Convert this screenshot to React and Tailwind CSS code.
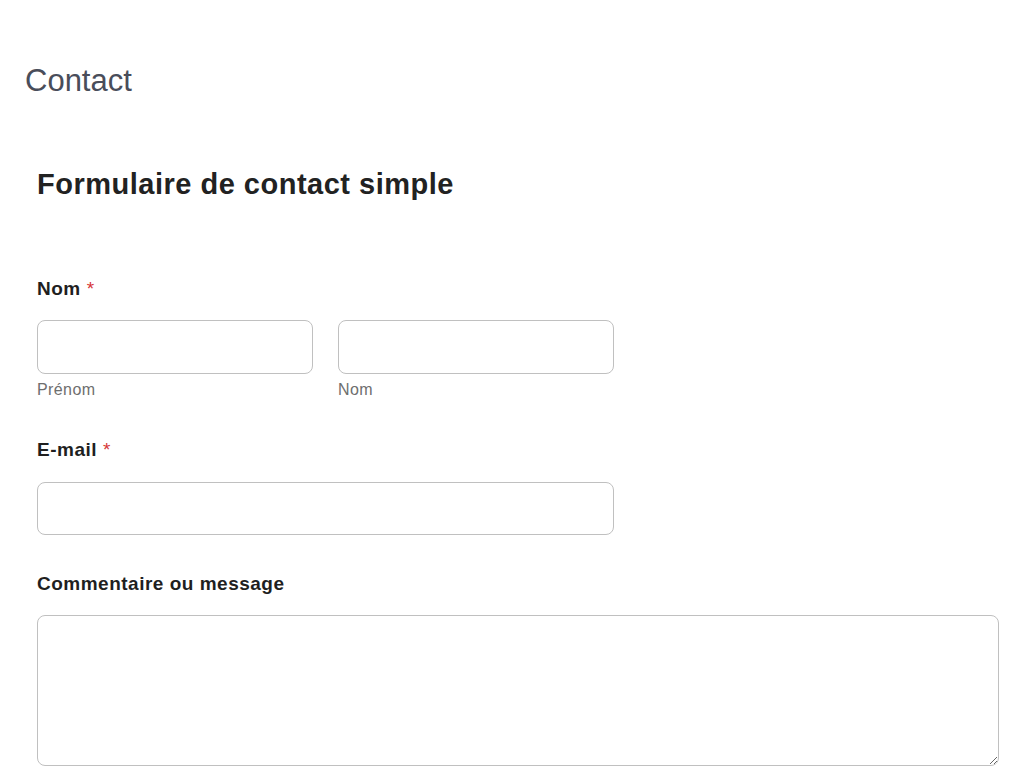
import React from "react";

function Required() {
  return <span className="ml-[6px] font-normal tracking-normal text-[#d63637]">*</span>;
}

function FieldLabel({ children, required }) {
  return (
    <label className="block text-[19px] leading-[22px] font-bold tracking-[0.5px] text-[#1f1f1f]">
      {children}
      {required && <Required />}
    </label>
  );
}

function TextInput() {
  return (
    <input
      type="text"
      className="block w-full h-[54px] rounded-[8px] border border-[#c0c0c0] bg-white px-3 text-[16px] outline-none"
    />
  );
}

export default function App() {
  return (
    <div
      className="min-h-screen bg-white pb-10"
      style={{ fontFamily: '"Liberation Sans", Arial, sans-serif' }}
    >
      <h1 className="pl-[25px] pt-[63px] text-[31px] leading-[36px] font-normal text-[#494d5a]">
        Contact
      </h1>

      <div className="pl-[37px] pr-[15px]">
        {/* form title */}
        <h2 className="mt-[68px] text-[29px] leading-[34px] font-bold tracking-[0.5px] text-[#222222]">
          Formulaire de contact simple
        </h2>

        <form className="mt-[77px]">
          {/* name */}
          <FieldLabel required>Nom</FieldLabel>
          <div className="mt-[20px] flex w-[60%] gap-[25px]">
            <div className="flex-1">
              <TextInput />
              <div className="mt-[6px] text-[16px] leading-[20px] tracking-[0.4px] text-[#6e6e6e]">Prénom</div>
            </div>
            <div className="flex-1">
              <TextInput />
              <div className="mt-[6px] text-[16px] leading-[20px] tracking-[0.4px] text-[#6e6e6e]">Nom</div>
            </div>
          </div>

          {/* email */}
          <div className="mt-[39px]">
            <FieldLabel required>E-mail</FieldLabel>
            <div className="mt-[21px] w-[60%]">
              <input
                type="email"
                className="block w-full h-[53px] rounded-[8px] border border-[#c0c0c0] bg-white px-3 text-[16px] outline-none"
              />
            </div>
          </div>

          {/* message */}
          <div className="mt-[38px]">
            <FieldLabel>Commentaire ou message</FieldLabel>
            <textarea className="mt-[20px] block w-full h-[151px] rounded-[8px] border border-[#c0c0c0] bg-white p-3 text-[16px] outline-none" />
          </div>
        </form>
      </div>
    </div>
  );
}
